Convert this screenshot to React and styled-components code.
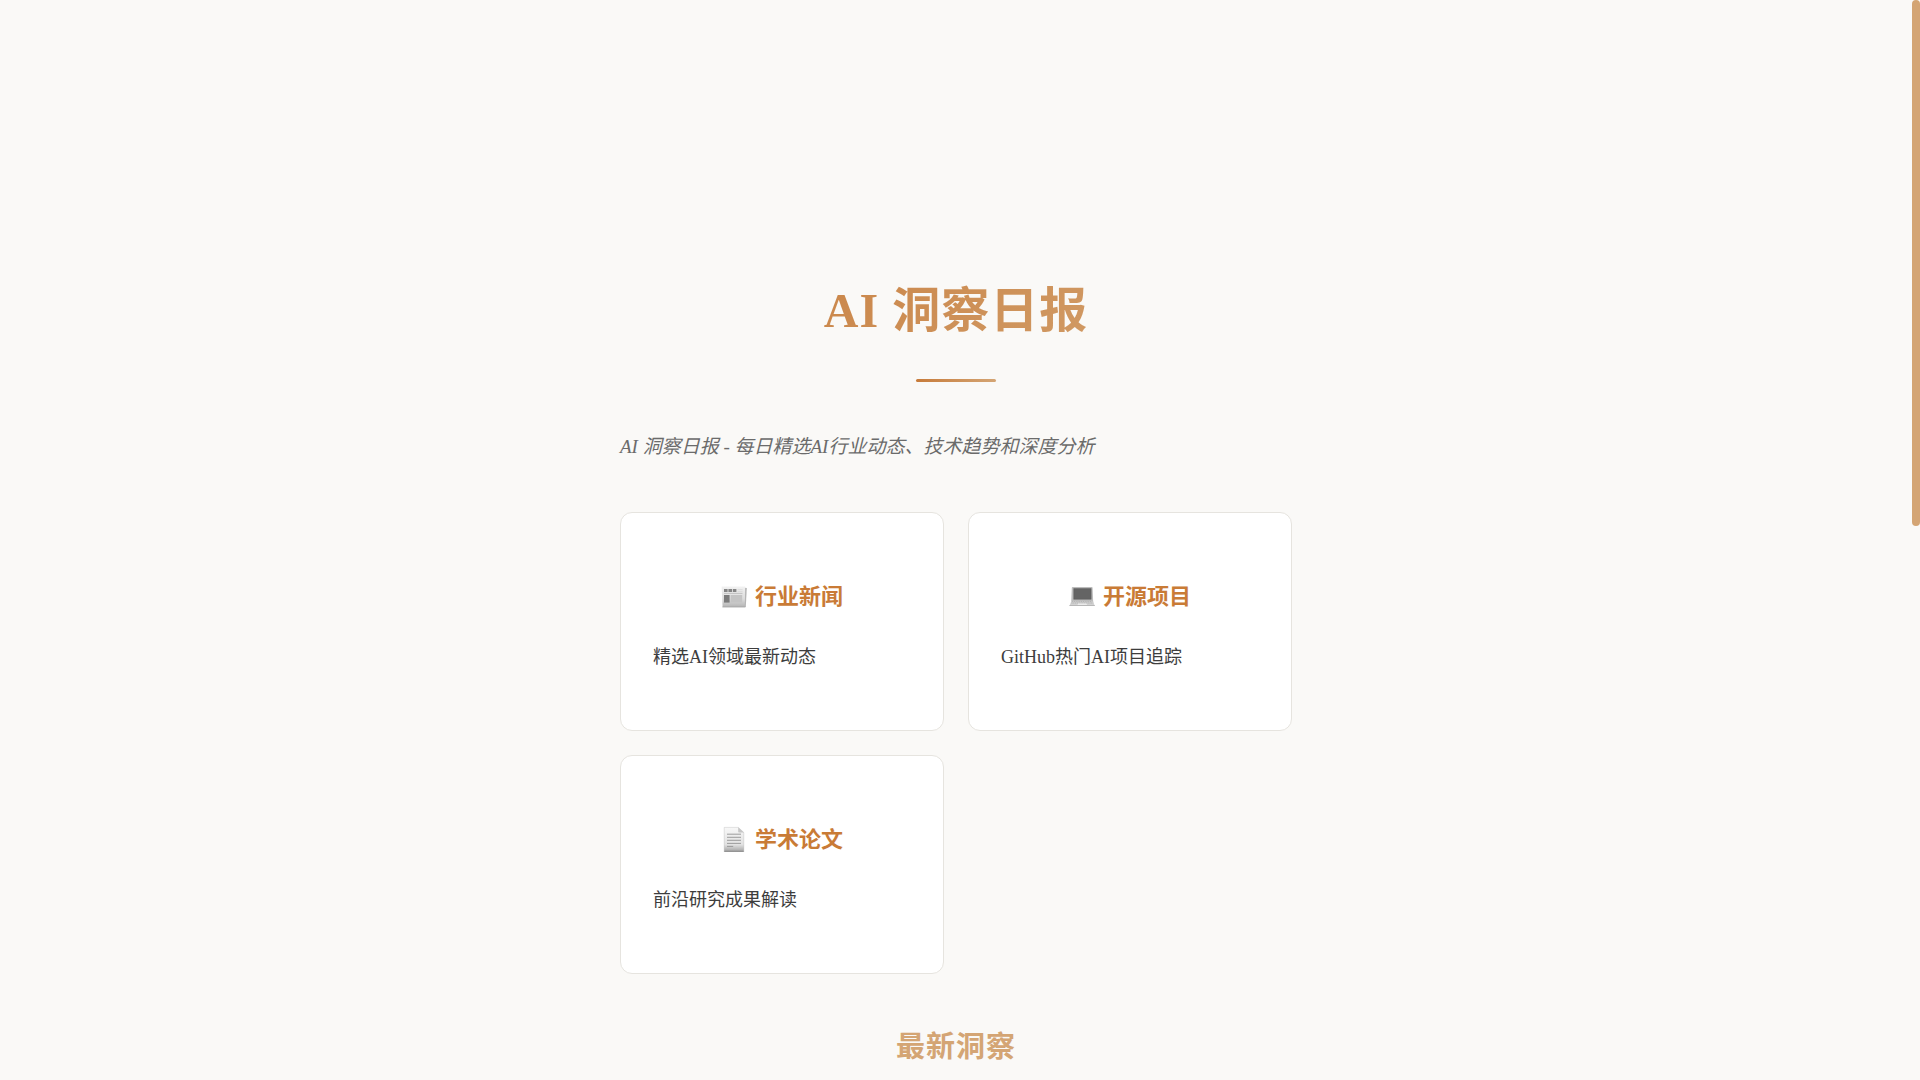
import React from 'react'
import styled, { createGlobalStyle } from 'styled-components'

const cards = [
  { Icon: NewspaperIcon, title: '行业新闻', text: '精选AI领域最新动态' },
  { Icon: LaptopIcon, title: '开源项目', text: 'GitHub热门AI项目追踪' },
  { Icon: PaperIcon, title: '学术论文', text: '前沿研究成果解读' },
]

function App() {
  return (
    <>
      <GlobalStyle />
      <Page>
        <Content>
          <Title>AI 洞察日报</Title>
          <Divider />
          <Tagline>AI 洞察日报 - 每日精选AI行业动态、技术趋势和深度分析</Tagline>
          <Cards>
            {cards.map(({ Icon, title, text }) => (
              <Card key={title}>
                <CardTitle>
                  <Icon />
                  {title}
                </CardTitle>
                <CardText>{text}</CardText>
              </Card>
            ))}
          </Cards>
          <SectionTitle>最新洞察</SectionTitle>
        </Content>
        <ScrollTrack>
          <ScrollThumb />
        </ScrollTrack>
      </Page>
    </>
  )
}

export default App

function NewspaperIcon() {
  return (
    <IconSvg viewBox="0 0 28 28" aria-hidden="true">
      <defs>
        <linearGradient id="news-page" x1="0" y1="0" x2="0" y2="1">
          <stop offset="0" stopColor="#f2f2f2" />
          <stop offset="0.6" stopColor="#dcdcdc" />
          <stop offset="1" stopColor="#b4b4b4" />
        </linearGradient>
      </defs>
      <path d="M22 4.5l3.8.5-1 19h-3z" fill="#b5b5b5" />
      <path d="M.6 3.6h23.6l-.4 20.4H1.6z" fill="url(#news-page)" />
      <path d="M1.4 24h23" stroke="#a2a2a2" strokeWidth="0.8" />
      <path d="M3 6h3.6v3H3zM7.4 6H11v3H7.4zM11.8 6h3.6v3h-3.6z" fill="#858585" />
      <path d="M3 10.4h18.5" stroke="#b2b2b2" strokeWidth="0.7" />
      <path d="M3 12h5.6v7.6H3z" fill="#7b7b7b" />
      <path d="M9.6 12h11.6v7.6H9.6z" fill="#c4c4c4" />
      <path d="M16.6 6.6h5M16.6 8.4h5" stroke="#d0d0d0" strokeWidth="0.6" />
    </IconSvg>
  )
}

function LaptopIcon() {
  return (
    <IconSvg viewBox="0 0 28 28" aria-hidden="true">
      <path d="M3.6 4h19.2q.7 0 .8.8l.6 14.4H2.2l.6-14.4q.1-.8.8-.8z" fill="#bcbcbc" />
      <path d="M4.7 5.5h17.5v10.8H4.7z" fill="#646464" stroke="#555" strokeWidth="0.4" />
      <path d="M2.4 18h21.6l1.6 4.4H.6z" fill="#d2d2d2" />
      <path d="M3 18.6h20.4M2.4 20h21.8" stroke="#a9a9a9" strokeWidth="0.8" strokeDasharray="1.2 0.6" />
      <path d="M9 20.4h8.6l.4 1.6H8.6z" fill="#ebebeb" />
      <path d="M.4 22.2h25.4v.8H.4z" fill="#aaa" />
    </IconSvg>
  )
}

function PaperIcon() {
  return (
    <IconSvg viewBox="0 0 28 28" aria-hidden="true">
      <defs>
        <linearGradient id="paper-page" x1="0" y1="0" x2="0" y2="1">
          <stop offset="0" stopColor="#f8f8f8" />
          <stop offset="0.7" stopColor="#e2e2e2" />
          <stop offset="0.9" stopColor="#b6b6b6" />
          <stop offset="1" stopColor="#8c8c8c" />
        </linearGradient>
      </defs>
      <path d="M3 1.2h14.4L23 6.6V26H3z" fill="url(#paper-page)" />
      <path d="M3.2 26V1.4h14.2L22.8 6.6V26" fill="none" stroke="#c9c9c9" strokeWidth="0.5" />
      <path d="M17.2 1.2v4.6q0 .8.8.8h5z" fill="#c6c6c6" />
      <path d="M6 8.2h14M6 11.3h14M6 14.3h14M6 17.4h14M6 20.4h6.2" stroke="#939393" strokeWidth="0.9" />
    </IconSvg>
  )
}

const GlobalStyle = createGlobalStyle`
  * {
    box-sizing: border-box;
  }

  body {
    margin: 0;
    background: #faf9f7;
    color: #3d3d3d;
    font-family: "Liberation Serif", "Noto Sans CJK SC", serif;
    font-size: 18px;
    line-height: 32px;
  }
`

const Page = styled.div`
  display: grid;
  grid-template-columns: 1fr 8px;
  height: 100vh;
  overflow: hidden;
`

const ScrollTrack = styled.div`
  height: 100vh;
`

const ScrollThumb = styled.div`
  height: 526px;
  border-radius: 4px;
  background: #d4a574;
`

const Content = styled.main`
  width: 100%;
  max-width: 720px;
  margin: 0 auto;
  padding: 273px 24px 0;
`

const Title = styled.h1`
  margin: 0;
  font-size: 48px;
  line-height: 76px;
  letter-spacing: 1px;
  text-align: center;
  background: linear-gradient(135deg, #c77b3a, #d4a574);
  -webkit-background-clip: text;
  background-clip: text;
  color: transparent;
`

const Divider = styled.div`
  width: 80px;
  height: 3px;
  margin: 30px auto 49px;
  border-radius: 2px;
  background: linear-gradient(90deg, #c77b3a, #d4a574);
`

const Tagline = styled.p`
  margin: 0 0 49px;
  color: #6b6b6b;
  font-size: 19px;
  font-style: italic;
`

const Cards = styled.div`
  display: grid;
  grid-template-columns: repeat(2, 1fr);
  gap: 24px;
`

const Card = styled.section`
  padding: 65px 32px 57px;
  background: #fff;
  border: 1px solid #e6e4df;
  border-radius: 12px;
`

const CardTitle = styled.h3`
  display: flex;
  justify-content: center;
  align-items: center;
  gap: 6px;
  margin: 0 0 25px;
  color: #c97b36;
  font-size: 22px;
  line-height: 38px;
`

const IconSvg = styled.svg`
  width: 28px;
  height: 28px;
`

const CardText = styled.p`
  margin: 0;
`

const SectionTitle = styled.h2`
  margin: 49px 0 0;
  color: #d4a574;
  font-size: 29px;
  line-height: 48px;
  letter-spacing: 1px;
  text-align: center;
`
